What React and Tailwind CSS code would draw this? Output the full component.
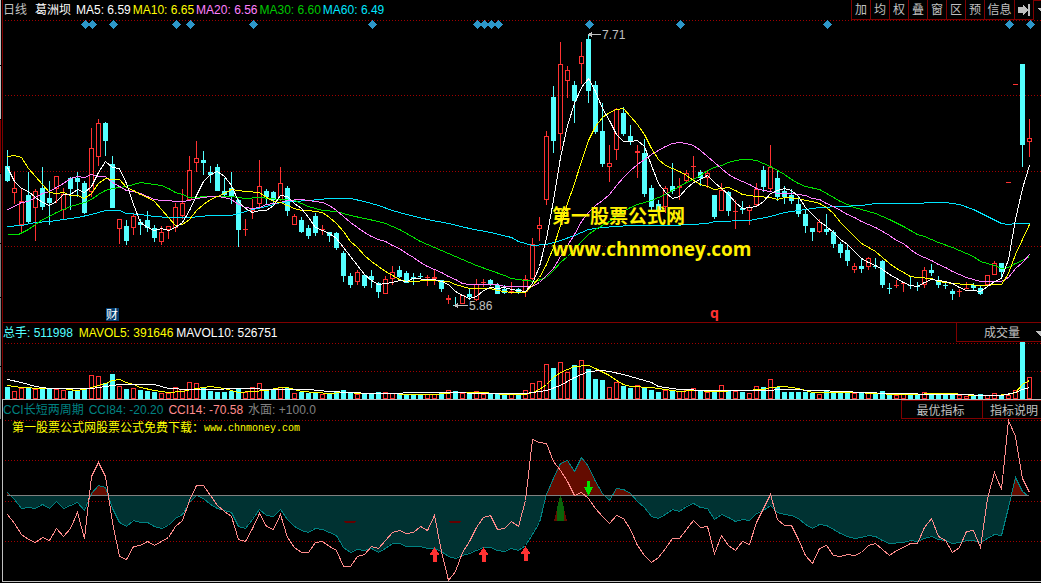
import React from 'react'

const STEP = 7
const FIRST_X = 7

// u = close above open (hollow), d = close below open (solid)
// [kind, high, bodyTop, bodyBottom, low, volumeTop]
const candles = [
	['d', 150, 166, 181, 182, 387], ['u', 172, 188, 193, 204, 391], ['u', 189, 201, 225, 233, 388],
	['d', 172, 195, 222, 224, 388], ['u', 189, 191, 208, 241, 389], ['d', 167, 188, 207, 210, 389],
	['d', 181, 198, 203, 225, 388], ['u', 176, 176, 189, 203, 389], ['u', 188, 194, 210, 220, 390],
	['d', 177, 178, 189, 210, 391], ['d', 172, 178, 182, 197, 390], ['d', 181, 183, 213, 214, 389],
	['u', 128, 148, 192, 197, 375], ['u', 119, 123, 157, 166, 376], ['d', 122, 123, 141, 156, 383],
	['d', 156, 164, 208, 208, 374], ['u', 219, 219, 229, 244, 386], ['d', 220, 226, 241, 245, 389],
	['u', 214, 216, 228, 235, 388], ['d', 219, 222, 225, 235, 390], ['d', 211, 220, 228, 232, 391],
	['d', 225, 228, 238, 242, 392], ['u', 226, 232, 242, 245, 393], ['u', 226, 226, 230, 239, 393],
	['u', 203, 207, 228, 232, 387], ['u', 189, 203, 216, 219, 389], ['u', 156, 170, 200, 200, 382],
	['u', 141, 158, 163, 172, 383], ['d', 151, 160, 163, 175, 388], ['d', 166, 172, 175, 183, 391],
	['d', 164, 167, 191, 191, 392], ['d', 178, 191, 195, 196, 392], ['d', 172, 188, 197, 204, 391],
	['d', 199, 200, 230, 247, 389], ['u', 219, 229, 229, 236, 392], ['u', 199, 208, 211, 219, 387],
	['u', 160, 186, 204, 208, 383], ['d', 189, 191, 197, 204, 389], ['d', 191, 192, 200, 203, 389],
	['u', 167, 183, 200, 201, 387], ['d', 186, 188, 211, 216, 388], ['u', 214, 216, 225, 225, 393],
	['d', 217, 220, 232, 233, 392], ['d', 225, 228, 236, 239, 393], ['d', 213, 216, 233, 236, 393],
	['u', 225, 229, 230, 235, 394], ['d', 232, 232, 236, 242, 393], ['d', 232, 233, 248, 250, 392],
	['d', 251, 253, 276, 282, 390], ['d', 273, 276, 285, 288, 393], ['u', 270, 272, 282, 285, 394],
	['d', 274, 275, 286, 288, 394], ['d', 270, 276, 280, 288, 393], ['d', 282, 283, 292, 298, 392],
	['u', 276, 279, 294, 294, 392], ['u', 266, 272, 279, 285, 393], ['d', 266, 270, 277, 278, 394],
	['d', 271, 273, 283, 283, 395], ['d', 273, 277, 279, 285, 394], ['d', 273, 276, 277, 278, 394],
	['u', 275, 277, 277, 286, 394], ['u', 270, 277, 279, 285, 394], ['d', 280, 280, 289, 292, 392],
	['u', 295, 298, 300, 304, 390], ['d', 297, 305, 305, 306, 391], ['u', 295, 295, 304, 304, 393],
	['d', 288, 294, 297, 300, 393], ['u', 279, 284, 300, 301, 391], ['u', 279, 282, 283, 287, 394],
	['d', 279, 280, 284, 286, 393], ['d', 283, 285, 294, 294, 393], ['d', 285, 289, 293, 294, 394],
	['u', 282, 291, 292, 294, 394], ['d', 288, 289, 292, 294, 393], ['u', 275, 279, 292, 297, 390],
	['u', 238, 244, 279, 280, 383], ['u', 217, 225, 229, 241, 381], ['u', 131, 136, 200, 205, 364],
	['d', 86, 97, 141, 153, 368], ['u', 42, 64, 134, 150, 362], ['u', 66, 70, 81, 98, 372],
	['d', 81, 85, 101, 123, 365], ['u', 42, 56, 64, 84, 360], ['d', 34, 39, 91, 103, 369],
	['d', 81, 85, 132, 134, 379], ['d', 103, 131, 164, 167, 380], ['u', 145, 163, 167, 182, 387],
	['u', 108, 109, 150, 160, 382], ['d', 107, 113, 134, 136, 386], ['d', 125, 136, 142, 145, 388],
	['u', 145, 151, 153, 178, 385], ['d', 139, 153, 194, 197, 387], ['d', 185, 188, 207, 210, 390],
	['d', 200, 204, 210, 215, 392], ['u', 186, 188, 207, 213, 390], ['d', 163, 186, 191, 194, 391],
	['u', 178, 186, 188, 200, 391], ['u', 170, 173, 181, 183, 390], ['u', 156, 166, 166, 180, 388],
	['d', 170, 172, 178, 186, 391], ['u', 170, 173, 178, 188, 392], ['d', 195, 195, 217, 219, 391],
	['u', 183, 190, 211, 211, 385], ['d', 191, 192, 211, 216, 390], ['u', 200, 211, 211, 229, 391],
	['d', 201, 208, 210, 214, 392], ['u', 205, 207, 211, 225, 393], ['u', 183, 189, 205, 207, 386],
	['d', 166, 170, 187, 192, 387], ['u', 145, 167, 189, 191, 379], ['d', 171, 178, 197, 201, 387],
	['d', 186, 191, 197, 204, 392], ['d', 189, 195, 201, 204, 392], ['d', 197, 204, 214, 217, 392],
	['d', 209, 214, 226, 233, 392], ['d', 228, 228, 232, 241, 393], ['u', 219, 222, 232, 233, 394],
	['d', 214, 229, 232, 235, 391], ['d', 230, 232, 244, 248, 391], ['d', 242, 244, 253, 258, 392],
	['d', 244, 250, 261, 266, 393], ['u', 263, 266, 270, 273, 393], ['d', 258, 266, 269, 273, 392],
	['u', 257, 258, 267, 270, 393], ['d', 258, 266, 267, 269, 393], ['d', 260, 261, 285, 288, 391],
	['d', 283, 288, 289, 294, 393], ['u', 280, 285, 285, 288, 395], ['u', 282, 283, 283, 292, 394],
	['d', 277, 285, 286, 289, 394], ['d', 282, 286, 287, 291, 394], ['u', 267, 270, 285, 288, 392],
	['d', 264, 270, 273, 276, 394], ['d', 276, 281, 285, 288, 394], ['d', 282, 285, 286, 289, 394],
	['d', 289, 291, 294, 300, 394], ['u', 289, 291, 291, 297, 395], ['u', 282, 288, 288, 289, 396],
	['d', 283, 285, 288, 290, 395], ['d', 286, 288, 294, 295, 394], ['u', 275, 275, 285, 287, 395],
	['u', 261, 263, 275, 275, 393], ['d', 263, 263, 272, 278, 395], ['u', 182, 182, 182, 182, 395],
	['u', 84, 84, 84, 84, 390], ['d', 64, 64, 145, 167, 342], ['u', 119, 138, 142, 157, 377],
]

const movingAverages = [
	{
		color: 'stroke-[#00e6ff]',
		points: '7,226 21,225 35,222 49,221 63,219 77,217 91,214 105,210 119,210 126,213 140,214 154,216 168,217 189,217 210,215 231,215 245,211 252,209 266,206 280,202 294,201 308,200 329,198 350,198 364,201 378,205 392,210 406,214 427,219 448,223 469,228 490,232 511,237 518,241 525,243 532,245 546,244 560,240 574,235 588,229 602,227 616,226 630,225 672,225 707,223 714,221 749,220 770,216 784,212 798,210 819,207 840,206 861,205 875,203 917,203 931,202 945,202 959,204 973,209 987,216 1001,223 1008,224 1015,223 1029,223',
	},
	{
		color: 'stroke-[#00e600]',
		points: '7,234 18,234 28,229 35,224 42,219 49,216 56,212 63,209 70,206 77,204 84,202 91,199 98,194 105,190 112,188 119,187 126,186 133,184 140,182 147,183 154,184 161,185 168,188 175,192 182,194 189,197 196,197 203,196 231,196 245,198 259,197 280,199 294,200 301,203 308,206 315,208 322,210 336,211 350,215 364,218 378,221 385,223 392,226 399,229 406,233 413,237 420,241 434,247 448,253 462,259 476,265 490,270 504,275 511,278 525,280 535,281 546,277 553,270 560,262 567,256 574,249 581,241 588,234 595,229 602,225 609,221 616,216 623,211 630,207 637,204 644,202 651,200 658,197 665,194 672,190 679,186 686,182 693,179 700,175 707,170 714,167 721,165 728,162 735,160 742,159 749,159 756,160 763,163 770,166 777,170 784,174 791,179 798,183 805,186 819,189 826,193 833,197 840,201 854,207 868,211 875,213 889,219 903,226 917,234 924,236 938,242 952,247 966,253 973,256 980,261 987,263 994,265 1001,268 1008,267 1015,263 1022,260 1029,256',
	},
	{
		color: 'stroke-[#ff80ff]',
		points: '7,209 14,206 21,202 28,201 35,197 42,193 49,191 56,187 63,183 70,178 77,176 84,177 91,174 98,176 105,176 112,182 119,186 126,190 133,191 140,193 147,196 154,199 161,200 168,200 175,201 182,201 189,200 196,198 203,197 210,196 217,196 224,197 231,199 238,204 245,207 252,208 259,207 266,204 280,202 287,200 301,199 308,200 315,201 322,202 329,205 336,210 343,216 350,222 357,227 364,232 371,236 378,239 385,241 392,245 399,248 406,253 413,257 420,262 427,266 434,269 441,272 448,276 455,279 462,283 469,284 497,284 504,286 518,286 532,286 539,282 546,275 553,268 560,256 567,245 574,234 581,221 588,212 595,205 602,200 609,194 616,185 623,177 630,170 637,164 644,159 651,154 658,150 665,146 672,143 679,142 686,143 693,145 700,150 707,156 714,162 721,168 728,174 735,178 742,181 749,184 756,188 763,190 770,191 777,193 791,193 798,194 805,195 812,198 819,199 826,203 833,206 840,210 847,214 854,217 861,221 868,224 875,227 882,231 889,235 896,240 903,243 910,249 917,254 924,257 931,260 938,264 945,267 952,271 959,274 966,277 973,279 980,281 1001,281 1008,277 1015,268 1022,262 1029,254',
	},
	{
		color: 'stroke-[#ffff00]',
		points: '7,156 14,155 21,157 28,168 35,176 42,184 49,192 56,193 63,192 70,195 77,195 84,198 91,193 98,183 105,178 112,179 119,179 126,187 133,190 140,194 147,197 154,201 161,209 168,217 175,225 182,224 189,219 196,210 203,204 210,199 217,196 224,193 231,189 245,191 259,192 266,197 273,201 280,202 287,205 294,208 301,210 308,210 315,211 322,212 329,217 336,223 343,231 350,241 357,247 364,255 371,261 378,266 385,271 392,275 399,279 406,281 413,281 427,280 448,281 455,284 462,286 469,288 490,288 497,290 511,292 525,292 532,285 539,277 546,264 553,247 560,225 567,203 574,183 581,161 588,140 595,126 602,117 609,112 616,109 623,108 630,116 637,124 644,134 651,148 658,159 665,165 672,168 679,171 686,175 693,180 700,184 707,186 714,189 721,188 728,187 735,190 742,194 756,196 770,197 777,199 784,197 798,198 805,200 812,201 819,203 826,207 833,213 840,222 847,229 854,236 861,243 868,247 875,251 882,257 889,263 896,268 903,272 910,276 917,277 931,278 938,281 952,283 966,284 980,285 1001,284 1008,273 1015,254 1022,239 1029,224',
	},
	{
		color: 'stroke-white',
		points: '7,167 14,181 21,188 28,191 35,197 42,202 49,205 56,201 63,194 70,194 77,189 84,192 91,186 98,172 105,161 112,167 119,168 126,183 133,204 140,222 147,227 154,230 161,228 168,230 175,227 182,222 189,210 196,195 203,181 210,174 217,171 224,176 231,185 238,201 245,208 252,212 259,210 266,210 273,205 280,195 287,196 294,203 301,208 308,217 315,227 322,230 329,233 336,238 343,247 350,256 357,265 364,274 371,280 378,284 385,283 392,282 399,280 406,281 413,278 427,279 434,279 441,281 448,284 455,291 462,295 469,298 476,296 483,290 490,287 497,288 504,287 511,289 518,290 525,291 532,283 539,266 546,238 553,200 560,157 567,125 574,103 581,87 588,78 595,91 602,108 609,120 616,134 623,141 630,141 637,140 644,146 651,165 658,183 665,192 672,198 679,196 686,188 693,182 700,179 707,175 714,182 721,188 728,194 735,202 742,208 749,207 756,206 763,201 770,193 777,190 784,188 791,190 798,196 805,207 812,214 819,221 826,226 833,232 840,239 847,244 854,251 861,258 868,262 875,265 882,269 889,274 896,278 903,282 910,285 917,286 924,282 931,279 938,280 945,281 952,283 959,287 966,290 973,290 980,291 987,286 994,281 1001,278 1008,259 1015,219 1022,188 1029,165',
	},
]

const volumeAverages = [
	{
		color: 'stroke-[#ffff00]',
		points: '7,385 21,387 42,388 63,388 75,390 84,389 91,387 98,385 105,383 112,380 119,379 126,382 133,384 140,387 154,390 168,392 182,391 196,388 210,386 224,388 238,392 252,391 266,390 280,387 287,387 301,391 315,392 329,393 343,392 364,393 390,393 406,394 434,394 455,392 483,392 504,394 525,394 532,392 539,389 546,384 553,377 560,372 567,369 574,366 588,365 595,368 609,375 616,380 623,384 630,386 651,387 665,389 679,391 693,390 714,391 742,390 763,389 770,387 784,386 798,388 812,392 854,392 896,394 952,393 973,395 994,395 1008,394 1015,392 1022,384 1029,380',
	},
	{
		color: 'stroke-white',
		points: '7,379 21,382 35,386 49,388 70,388 91,388 105,386 119,384 154,384 168,388 189,389 210,389 238,388 280,389 308,389 329,391 350,392 371,393 434,392 497,393 525,393 546,390 560,385 574,377 588,371 602,370 609,371 623,374 637,378 651,382 658,386 679,389 707,390 763,390 784,389 819,390 840,391 889,393 945,394 1001,395 1015,392 1022,389 1029,387',
	},
]

const cci84 = '7,492 14,499 21,508 28,507 35,508 42,504 49,508 56,501 63,508 70,505 77,502 84,510 91,493 98,485 105,487 112,508 119,522 126,526 133,520 140,522 147,522 154,526 161,528 168,525 175,518 182,514 189,502 196,495 203,498 210,504 217,508 224,510 231,512 238,526 245,528 252,519 259,509 266,515 273,516 280,509 287,519 294,526 301,530 308,532 315,528 322,529 329,532 336,535 343,547 350,552 357,549 364,550 371,548 378,552 385,548 392,543 399,543 406,546 420,546 427,548 434,548 441,551 448,556 455,558 462,555 469,553 476,550 483,547 490,547 497,550 504,551 511,548 518,550 525,545 532,534 539,522 546,494 553,478 560,463 567,460 574,471 581,457 588,466 595,481 602,493 609,500 616,488 623,489 630,493 637,501 644,507 651,516 658,518 665,514 672,509 679,511 686,506 693,503 700,507 707,508 714,519 721,514 728,517 735,521 742,519 749,520 756,513 763,510 770,505 777,512 784,514 791,515 798,518 805,524 812,528 819,524 826,525 833,529 840,533 847,536 854,538 861,537 868,535 875,536 882,540 889,543 903,542 910,540 917,541 924,538 931,536 938,539 945,540 952,543 959,542 966,540 973,540 980,542 987,538 994,534 1001,535 1008,507 1015,477 1022,491 1027,495'

const cci14 = '7,514 14,523 21,534 28,539 35,542 42,537 49,540 56,528 63,536 70,528 77,512 84,538 91,476 98,462 105,476 112,522 119,556 126,559 133,546 140,545 147,541 154,545 161,541 168,537 175,526 182,520 189,500 196,485 203,485 210,495 217,505 224,511 231,516 238,539 245,541 252,528 259,513 266,526 273,529 280,514 287,537 294,547 301,552 308,552 315,542 322,541 329,546 336,550 343,566 350,566 357,556 364,554 371,546 378,548 385,540 392,532 399,530 406,533 413,532 420,526 427,530 434,515 441,551 448,580 455,571 462,552 469,541 476,527 483,517 490,515 497,529 504,528 511,521 518,526 525,500 532,439 539,442 546,443 553,461 560,470 567,481 574,495 581,492 588,498 595,508 602,516 609,523 616,515 623,518 630,529 637,545 644,555 651,562 658,557 665,548 672,538 679,538 686,529 693,520 700,527 707,526 714,553 721,535 728,545 735,550 742,541 749,544 756,522 763,508 770,494 777,519 784,525 791,525 798,539 805,555 812,563 819,548 826,545 833,555 840,556 847,554 854,555 861,552 868,545 875,543 882,549 889,555 896,550 903,547 910,543 917,543 924,527 931,518 938,536 945,540 952,552 959,547 966,531 973,530 980,547 987,498 994,472 1001,489 1008,420 1015,436 1022,478 1029,492'

const eventMarks = [85, 92, 113, 176, 190, 253, 372, 477, 484, 491, 498, 589, 680, 827, 1009, 1030]

const toolButtons = ['加', '均', '权', '叠', '窗', '区', '预']

function GridLines({ rows }) {
	return rows.map((y) => (
		<line key={y} x1="5" x2="1041" y1={y + 0.5} y2={y + 0.5} strokeDasharray="1 2" className="stroke-[#a00000]" />
	))
}

function Lines({ items }) {
	return (
		<g fill="none" transform="translate(.5 .5)">
			{items.map((item) => (
				<polyline key={item.color} points={item.points} className={item.color} />
			))}
		</g>
	)
}

function Candle({ index, data }) {
	const x = FIRST_X + index * STEP
	const [kind, high, top, bottom, low] = data
	const height = Math.max(bottom - top, 1)

	if (kind === 'd') {
		return (
			<g className="fill-[#54ffff]">
				<rect x={x} y={high} width="1" height={low - high} />
				<rect x={x - 2} y={top} width="5" height={height} />
			</g>
		)
	}
	return (
		<g className="fill-[#ff3232]">
			{top > high && <rect x={x} y={high} width="1" height={top - high} />}
			{low > bottom && <rect x={x} y={bottom} width="1" height={low - bottom} />}
			{height < 3 ? (
				<rect x={x - 2} y={top} width="5" height={height} />
			) : (
				<rect x={x - 1.5} y={top + 0.5} width="4" height={height - 1} className="fill-none stroke-[#ff3232]" />
			)}
		</g>
	)
}

function PriceChart() {
	return (
		<svg viewBox="3 20 1038 302" className="w-full" shapeRendering="crispEdges">
			<GridLines rows={[20, 95, 171, 246]} />
			{eventMarks.map((x) => (
				<path key={x} d={`M${x - 4} 24.5L${x + 0.5} 20L${x + 5} 24.5L${x + 0.5} 29Z`} className="fill-[#2d96c8]" />
			))}
			{candles.map((c, i) => (
				<Candle key={i} index={i} data={c} />
			))}
			<Lines items={movingAverages} />

			{/* 最高 / 最低价 */}
			<g className="fill-[#c0c0c0] font-['Liberation_Sans'] text-xs">
				<path d="M589 34h12v1h-12zM588 34.5l4-3v6z" />
				<text x="602" y="39">7.71</text>
				<path d="M456 305h12v1h-12zM454 305.5l4-3v6z" />
				<text x="469" y="310">5.86</text>
			</g>

			<rect x="106" y="308" width="13" height="13" className="fill-[#003a6e]" />
			<text x="106" y="319" className="fill-white font-['Noto_Sans_CJK_SC',sans-serif] text-xs">财</text>
			<text x="710" y="318" className="fill-[#ff3232] font-['Noto_Sans'] text-sm font-bold">q</text>

			<g className="fill-[#fff000] text-[19px] font-bold">
				<text x="552" y="223" className="font-['Noto_Sans_CJK_SC',sans-serif]">第一股票公式网</text>
				<text x="552" y="256" className="font-['Open_Sans']">www.chnmoney.com</text>
			</g>
		</svg>
	)
}

function VolumeChart() {
	return (
		<svg viewBox="3 342 1038 57" className="w-full" shapeRendering="crispEdges">
			<GridLines rows={[343, 371]} />
			{candles.map((c, i) => {
				const x = FIRST_X + i * STEP
				const top = c[5]
				return c[0] === 'd' ? (
					<rect key={i} x={x - 2} y={top} width="5" height={399 - top} className="fill-[#54ffff]" />
				) : (
					<rect key={i} x={x - 1.5} y={top + 0.5} width="4" height={398 - top} className="fill-none stroke-[#ff3232]" />
				)
			})}
			<Lines items={volumeAverages} />
		</svg>
	)
}

function UpArrow({ x, y }) {
	return <path d={`M${x + 0.5} ${y}l5 8h-3v7h-4v-7h-3z`} className="fill-[#ff3232]" />
}

function DropMark({ className }) {
	return (
		<svg viewBox="0 0 10 5" className={className} shapeRendering="crispEdges">
			<path d="M0 0h10l-5 5z" />
		</svg>
	)
}

function CciChart() {
	const area = `7,495 ${cci84} 1027,495`
	return (
		<svg viewBox="3 419 1038 162" className="w-full" shapeRendering="crispEdges">
			<defs>
				<clipPath id="above">
					<rect x="3" y="419" width="1038" height="76" />
				</clipPath>
				<clipPath id="below">
					<rect x="3" y="495" width="1038" height="86" />
				</clipPath>
			</defs>
			<GridLines rows={[420, 460, 501, 541]} />
			<polygon points={area} clipPath="url(#above)" className="fill-[#640c00]" />
			<polygon points={area} clipPath="url(#below)" className="fill-[#003232]" />

			<path d="M343 521h14l-3 2h-8zM448 521h14l-3 2h-8z" className="fill-[#640000]" />
			<path d="M560 496h1l6 25h-13z" className="fill-[#640c00]" />
			<path d="M560 496h1l3 12v13h-7v-13z" className="fill-[#0a640a]" />

			<Lines items={[{ color: 'stroke-[#008282]', points: cci84 }]} />
			<rect x="7" y="495" width="1022" height="1" className="fill-[#808080]" />
			<Lines items={[{ color: 'stroke-[#ff8c8c]', points: cci14 }]} />

			<UpArrow x={434} y={547} />
			<UpArrow x={483} y={547} />
			<UpArrow x={525} y={546} />
			<path d="M587 481h3v6h3l-4.5 9l-4.5 -9h3z" className="fill-[#00e600]" />

			<text x="12" y="432" className="fill-[#ffff00] font-['Noto_Sans_CJK_SC',sans-serif] text-xs">第一股票公式网股票公式免费下载：</text>
			<text x="204" y="431" className="fill-[#ffff00] font-['Liberation_Mono'] text-[10px]">www.chnmoney.com</text>
		</svg>
	)
}

export default function App() {
	return (
		<main className="flex min-h-screen bg-black font-['Liberation_Sans','Noto_Sans_CJK_SC',sans-serif] text-xs text-[#c0c0c0]">
			{/* 左侧窗口边缘 */}
			<div className="flex w-[2px] shrink-0 flex-col gap-px pr-px">
				<div className="h-[65px] bg-[#c0c0c0]" />
				<div className="h-[53px] bg-[#c0c0c0]" />
				<div className="h-[53px] bg-[#800000]" />
				<div className="h-[69px] bg-[#808080]" />
				<div className="h-[53px] bg-[#808080]" />
				<div className="h-[68px] bg-[#808080]" />
				<div className="h-[52px] bg-[#808080]" />
			</div>

			<div className="min-w-0 flex-1">
				<section className="border-b border-l border-[#800000]">
					<header className="flex h-5 items-start justify-between">
						<div className="flex gap-[2px] leading-5 whitespace-nowrap">
							<span>日线</span>
							<h1 className="pr-[3px] pl-[6px] text-white">葛洲坝</h1>
							<span className="text-white">MA5: 6.59</span>
							<span className="text-[#ffff00]">MA10: 6.65</span>
							<span className="text-[#ff80ff]">MA20: 6.56</span>
							<span className="text-[#00c800]">MA30: 6.60</span>
							<span className="text-[#00e6ff]">MA60: 6.49</span>
						</div>
						<nav className="flex h-5 leading-5">
							{toolButtons.map((label) => (
								<button key={label} className="w-[19px] border-b border-l border-[#800000]">{label}</button>
							))}
							<button className="w-[30px] border-b border-l border-[#800000]">信息</button>
							<button aria-label="移到最后" className="w-[19px] border-b border-l border-[#800000] pl-[3px]">
								<svg viewBox="0 0 13 12" className="h-3 w-[13px] fill-[#c0c0c0]" shapeRendering="crispEdges">
									<path d="M0 3h5v-3l5 6l-5 6v-3h-5zM10 0h2v12h-2z" />
								</svg>
							</button>
							<button aria-label="更多" className="w-2 overflow-hidden border-t border-l border-[#800000] pl-[3px]">
								<DropMark className="h-[5px] w-[10px] max-w-none fill-[#c0c0c0]" />
							</button>
						</nav>
					</header>
					<PriceChart />
				</section>

				<section className="border-b border-b-[#c0c0c0]">
					<div className="border-l border-[#800000]">
						<header className="flex h-[19px] justify-between">
							<div className="flex gap-[3px] leading-5 whitespace-nowrap">
								<span className="pr-[3px] text-[#54ffff]">总手: 511998</span>
								<span className="text-[#ffff00]">MAVOL5: 391646</span>
								<span className="text-white">MAVOL10: 526751</span>
							</div>
							<div className="relative flex w-[85px] overflow-hidden border-b border-l border-[#800000]">
								<select aria-label="副图指标" className="w-full appearance-none bg-black pl-[27px] leading-5">
									<option>成交量</option>
								</select>
								<DropMark className="pointer-events-none absolute top-2 -right-1 h-[5px] w-[10px] fill-[#c0c0c0]" />
							</div>
						</header>
						<VolumeChart />
					</div>
				</section>

				<section className="border-b border-l border-[#c0c0c0]">
					<header className="flex h-[19px] justify-between">
						<div className="flex gap-[5px] leading-5 whitespace-nowrap">
							<span className="text-[#008282]">CCI长短两周期</span>
							<span className="text-[#008282]">CCI84: -20.20</span>
							<span className="text-[#ff8c8c]">CCI14: -70.58</span>
							<span className="text-[#808080]">水面: +100.0</span>
						</div>
						<div className="flex leading-5">
							<button className="w-[81px] border-t border-b border-l border-[#800000] pr-[3px]">最优指标</button>
							<button className="w-[59px] border-t border-b border-l border-[#800000] pl-1">指标说明</button>
						</div>
					</header>
					<CciChart />
				</section>
			</div>
		</main>
	)
}
